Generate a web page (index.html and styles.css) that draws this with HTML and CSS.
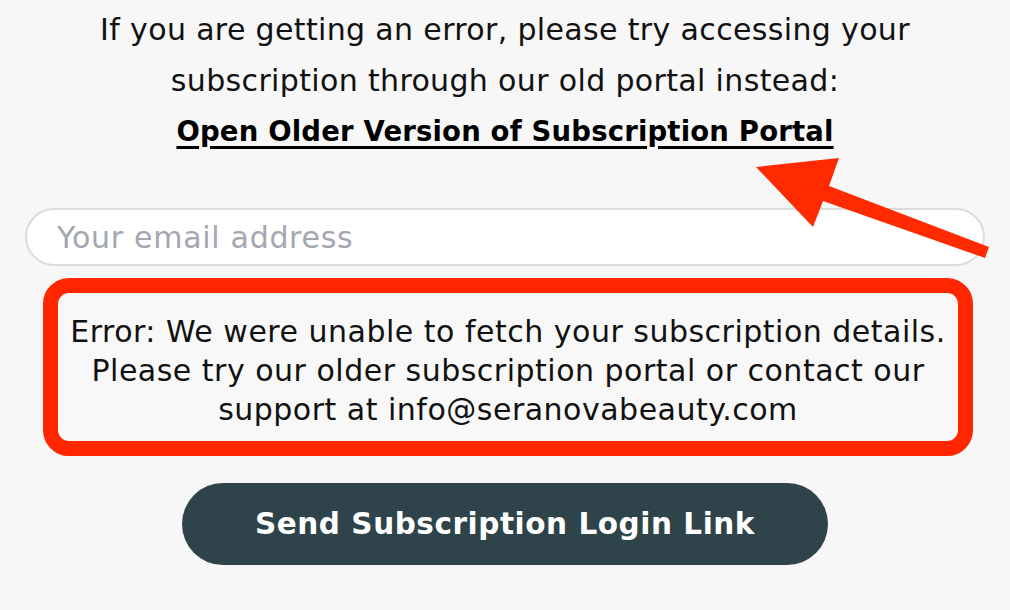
FILE: index.html
```html
<!DOCTYPE html>
<html lang="en">
<head>
<meta charset="utf-8">
<title>Subscription</title>
<link rel="stylesheet" href="styles.css">
</head>
<body>
<main class="page">
  <p class="intro">If you are getting an error, please try accessing your<br>subscription through our old portal instead:</p>
  <a class="old-link" href="#">Open Older Version of Subscription Portal</a>
  <input class="email" type="email" placeholder="Your email address">
  <div class="error-box">
    <p>Error: We were unable to fetch your subscription details.<br>Please try our older subscription portal or contact our<br>support at info@seranovabeauty.com</p>
  </div>
  <button class="send-btn" type="button">Send Subscription Login Link</button>
  <svg class="arrow" width="1010" height="610" viewBox="0 0 1010 610" aria-hidden="true">
    <polygon points="756,167 839,158 829,186 989,247 985,258 823,201 813,227" fill="#ff2a00"/>
  </svg>
</main>
</body>
</html>
```
FILE: styles.css
```css
html, body {
  margin: 0;
  padding: 0;
  background: #f7f7f7;
}
body {
  font-family: "DejaVu Sans", "Inter", sans-serif;
  color: #111;
}
.page {
  position: relative;
  width: 1010px;
  height: 610px;
  box-sizing: border-box;
  padding: 4px 25px 0;
  display: flex;
  flex-direction: column;
  align-items: center;
}
.intro {
  margin: 0;
  text-align: center;
  font-size: 30px;
  letter-spacing: 0.35px;
  line-height: 51px;
  white-space: nowrap;
}
.old-link {
  display: block;
  font-size: 27.5px;
  letter-spacing: 0.17px;
  line-height: 51px;
  font-weight: 700;
  color: #000;
  text-decoration: underline;
  text-underline-offset: 5px;
  text-decoration-thickness: 3px;
  white-space: nowrap;
}
.email {
  margin-top: 51px;
  width: 960px;
  height: 58px;
  box-sizing: border-box;
  border: 2px solid #dcdcdc;
  border-radius: 29px;
  background: #fff;
  padding: 0 30px;
  font-family: inherit;
  font-size: 30px;
  letter-spacing: 0.7px;
  color: #111;
  outline: none;
}
.email::placeholder {
  color: #a3a7b0;
}
.error-box {
  margin-top: 12px;
  margin-left: 6px;
  width: 930px;
  height: 178px;
  box-sizing: border-box;
  border: 15px solid #ff2600;
  border-radius: 26px;
  background: #f8f8f8;
  display: flex;
  align-items: center;
  justify-content: center;
  padding-top: 6px;
}
.error-box p {
  margin: 0;
  text-align: center;
  font-size: 30px;
  letter-spacing: 0.5px;
  line-height: 39px;
  color: #111;
  white-space: nowrap;
}
.send-btn {
  margin-top: 27px;
  width: 646px;
  height: 82px;
  border: none;
  border-radius: 41px;
  background: #2f444a;
  color: #fff;
  font-family: inherit;
  font-size: 29.5px;
  letter-spacing: 0.55px;
  font-weight: 700;
}
.arrow {
  position: absolute;
  left: 0;
  top: 0;
  pointer-events: none;
}
```
